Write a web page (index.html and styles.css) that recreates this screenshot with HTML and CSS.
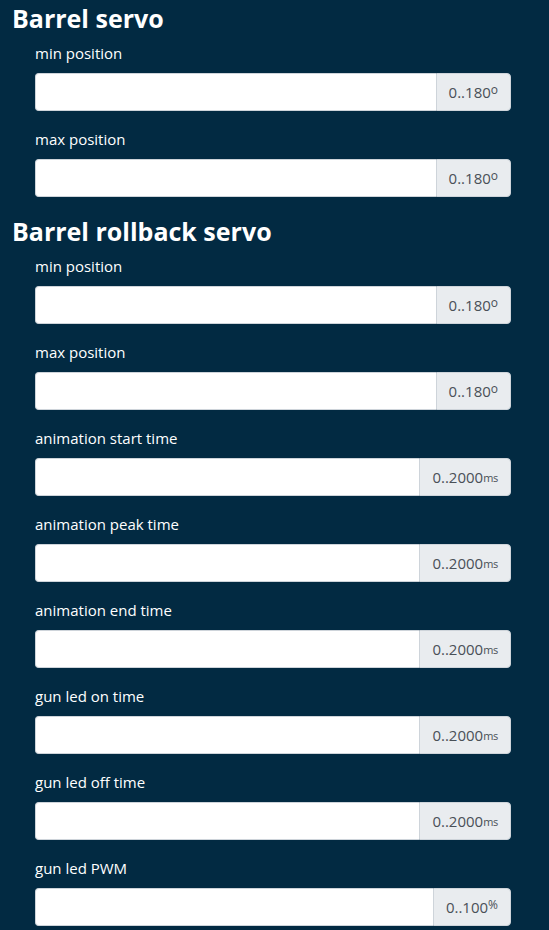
FILE: index.html
```html
<!DOCTYPE html>
<html>
<head>
<meta charset="utf-8">
<link rel="stylesheet" href="styles.css">
</head>
<body>
<div class="page">
  <h3 class="title">Barrel servo</h3>
  <div class="fields">
    <div class="group">
      <label class="label">min position</label>
      <div class="input-group"><input class="control" type="text"><span class="append">0..180<sup>o</sup></span></div>
    </div>
    <div class="group">
      <label class="label">max position</label>
      <div class="input-group"><input class="control" type="text"><span class="append">0..180<sup>o</sup></span></div>
    </div>
  </div>
  <h3 class="title">Barrel rollback servo</h3>
  <div class="fields">
    <div class="group">
      <label class="label">min position</label>
      <div class="input-group"><input class="control" type="text"><span class="append">0..180<sup>o</sup></span></div>
    </div>
    <div class="group">
      <label class="label">max position</label>
      <div class="input-group"><input class="control" type="text"><span class="append">0..180<sup>o</sup></span></div>
    </div>
    <div class="group">
      <label class="label">animation start time</label>
      <div class="input-group"><input class="control" type="text"><span class="append">0..2000<sub>ms</sub></span></div>
    </div>
    <div class="group">
      <label class="label">animation peak time</label>
      <div class="input-group"><input class="control" type="text"><span class="append">0..2000<sub>ms</sub></span></div>
    </div>
    <div class="group">
      <label class="label">animation end time</label>
      <div class="input-group"><input class="control" type="text"><span class="append">0..2000<sub>ms</sub></span></div>
    </div>
    <div class="group">
      <label class="label">gun led on time</label>
      <div class="input-group"><input class="control" type="text"><span class="append">0..2000<sub>ms</sub></span></div>
    </div>
    <div class="group">
      <label class="label">gun led off time</label>
      <div class="input-group"><input class="control" type="text"><span class="append">0..2000<sub>ms</sub></span></div>
    </div>
    <div class="group">
      <label class="label">gun led PWM</label>
      <div class="input-group"><input class="control" type="text"><span class="append">0..100<sup>%</sup></span></div>
    </div>
  </div>
</div>
</body>
</html>
```
FILE: styles.css
```css
html, body {
  margin: 0;
  padding: 0;
  background: #022a42;
}
body {
  font-family: "Open Sans", "Noto Sans", sans-serif;
  color: #fff;
  font-size: 15px;
  line-height: 24px;
}
.page {
  padding: 0 12px;
}
.title {
  margin: 0 0 8px 0;
  padding-top: 4px;
  font-size: 25px;
  line-height: 29px;
  font-weight: 700;
  color: #fff;
}
.fields {
  padding-left: 23px;
  width: 476px;
}
.group {
  margin-bottom: 16px;
}
.label {
  display: block;
  margin-bottom: 8px;
  font-size: 15px;
  line-height: 24px;
}
.input-group {
  display: flex;
  height: 38px;
}
.control {
  flex: 1 1 auto;
  min-width: 0;
  height: 38px;
  box-sizing: border-box;
  margin: 0;
  border: 1px solid #ced4da;
  border-right: 0;
  border-radius: 4px 0 0 4px;
  background: #fff;
  padding: 6px 12px;
  font-family: inherit;
  font-size: 15px;
  outline: none;
}
.append {
  display: flex;
  align-items: center;
  box-sizing: border-box;
  height: 38px;
  padding: 0 12px;
  background: #e9ecef;
  border: 1px solid #ced4da;
  border-radius: 0 4px 4px 0;
  color: #495057;
  font-size: 15px;
  white-space: nowrap;
}
.append sup {
  font-size: 12px;
  line-height: 0;
  position: relative;
  top: -2px;
  vertical-align: super;
}
.append sub {
  font-size: 11px;
  line-height: 0;
  position: relative;
  top: 1px;
  vertical-align: sub;
  letter-spacing: -0.3px;
}
```
